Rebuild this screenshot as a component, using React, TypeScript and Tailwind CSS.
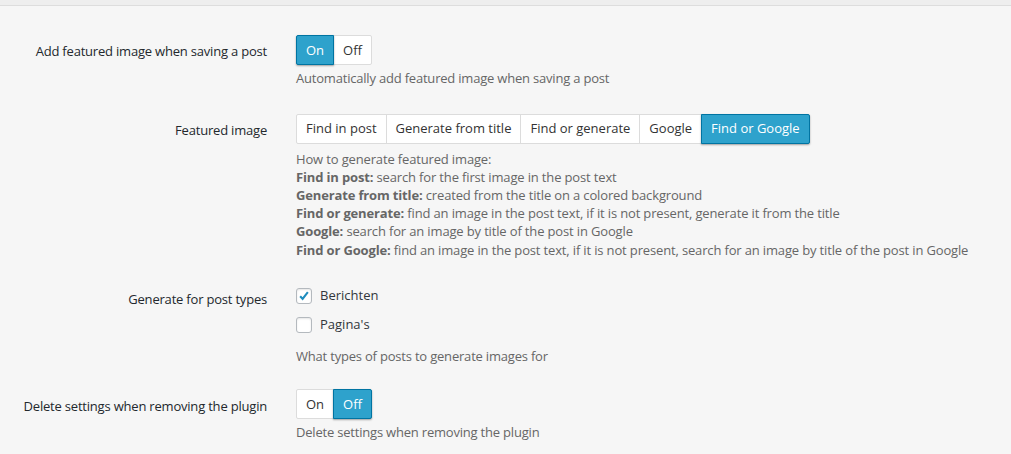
import { useState } from "react";

type Option = { value: string; label: string };

const featuredOptions: Option[] = [
  { value: "post", label: "Find in post" },
  { value: "title", label: "Generate from title" },
  { value: "generate", label: "Find or generate" },
  { value: "google", label: "Google" },
  { value: "find_google", label: "Find or Google" },
];

const onOff: Option[] = [
  { value: "on", label: "On" },
  { value: "off", label: "Off" },
];

function SegmentedControl({
  options,
  value,
  onChange,
}: {
  options: Option[];
  value: string;
  onChange: (v: string) => void;
}) {
  return (
    <div className="flex">
      {options.map((opt, i) => {
        const active = opt.value === value;
        return (
          <button
            key={opt.value}
            onClick={() => onChange(opt.value)}
            className={`h-[30px] px-[9px] text-[13px] leading-none border ${
              i > 0 ? "-ml-px" : ""
            } ${i === 0 ? "rounded-l-[2px]" : ""} ${
              i === options.length - 1 ? "rounded-r-[2px]" : ""
            } ${
              active
                ? "relative z-10 bg-[#2ea2cc] border-[#0074a2] text-white shadow-[0_1px_2px_rgba(0,0,0,0.35)]"
                : "bg-white border-[#dcdcdc] text-[#333]"
            }`}
          >
            {opt.label}
          </button>
        );
      })}
    </div>
  );
}

function Checkbox({
  checked,
  label,
  onToggle,
}: {
  checked: boolean;
  label: string;
  onToggle: () => void;
}) {
  return (
    <label className="flex items-center gap-[8px] cursor-pointer h-[16px]" onClick={onToggle}>
      <span className="w-[16px] h-[16px] rounded-[3px] border border-[#b4b9be] bg-white flex items-center justify-center shadow-[inset_0_1px_2px_rgba(0,0,0,0.1)]">
        {checked && (
          <svg width="16" height="16" viewBox="0 0 20 20">
            <path d="M4.5 10.5l3.5 3.5L15.5 4.5" fill="none" stroke="#1e8cbe" strokeWidth="3" />
          </svg>
        )}
      </span>
      <span className="text-[13px] text-[#32373c]">{label}</span>
    </label>
  );
}

function Row({
  label,
  labelPad,
  children,
  className = "",
}: {
  label: string;
  labelPad: string;
  children: React.ReactNode;
  className?: string;
}) {
  return (
    <div className={`flex ${className}`}>
      <div className={`w-[267px] shrink-0 text-right text-[13px] tracking-[-0.2px] text-[#23282d] ${labelPad}`}>
        {label}
      </div>
      <div className="pl-[29px]">{children}</div>
    </div>
  );
}

export default function App() {
  const [addOnSave, setAddOnSave] = useState("on");
  const [mode, setMode] = useState("find_google");
  const [posts, setPosts] = useState(true);
  const [pages, setPages] = useState(false);
  const [deleteSettings, setDeleteSettings] = useState("off");

  return (
    <div className="w-[1011px] h-[454px] bg-[#f6f6f6] font-['Open_Sans',sans-serif] overflow-hidden">
      <div className="h-[6px] bg-[#eeeeee] border-b border-[#dddddd]" />

      <Row label="Add featured image when saving a post" labelPad="pt-[7px]" className="mt-[29px]">
        <SegmentedControl options={onOff} value={addOnSave} onChange={setAddOnSave} />
        <p className="mt-[4px] text-[13px] tracking-[-0.2px] text-[#666]">
          Automatically add featured image when saving a post
        </p>
      </Row>

      <Row label="Featured image" labelPad="pt-[7px]" className="mt-[25px]">
        <SegmentedControl options={featuredOptions} value={mode} onChange={setMode} />
        <div className="mt-[6px] text-[13px] leading-[18.2px] text-[#666] tracking-[-0.15px]">
          <div>How to generate featured image:</div>
          <div>
            <b>Find in post:</b> search for the first image in the post text
          </div>
          <div>
            <b>Generate from title:</b> created from the title on a colored background
          </div>
          <div>
            <b>Find or generate:</b> find an image in the post text, if it is not present, generate it from the title
          </div>
          <div>
            <b>Google:</b> search for an image by title of the post in Google
          </div>
          <div>
            <b>Find or Google:</b> find an image in the post text, if it is not present, search for an image by title
            of the post in Google
          </div>
        </div>
      </Row>

      <Row label="Generate for post types" labelPad="pt-[2px]" className="mt-[29px]">
        <div className="flex flex-col gap-[13px]">
          <Checkbox checked={posts} label="Berichten" onToggle={() => setPosts(!posts)} />
          <Checkbox checked={pages} label="Pagina's" onToggle={() => setPages(!pages)} />
        </div>
        <p className="mt-[14px] text-[13px] tracking-[-0.2px] text-[#666]">What types of posts to generate images for</p>
      </Row>

      <Row label="Delete settings when removing the plugin" labelPad="pt-[8px]" className="mt-[23px]">
        <SegmentedControl options={onOff} value={deleteSettings} onChange={setDeleteSettings} />
        <p className="mt-[4px] text-[13px] tracking-[-0.2px] text-[#666]">Delete settings when removing the plugin</p>
      </Row>
    </div>
  );
}
